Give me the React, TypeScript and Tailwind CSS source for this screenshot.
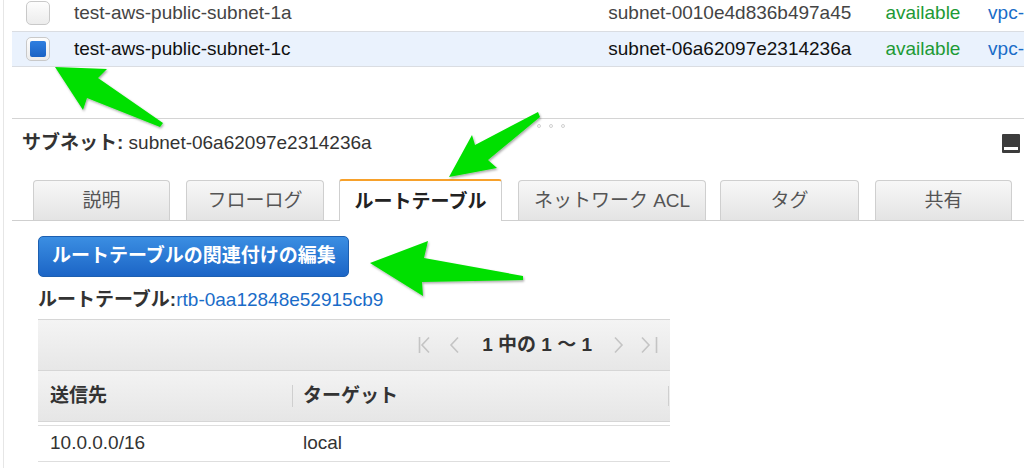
import React from 'react';

const font = "font-['Liberation_Sans','Noto_Sans_CJK_JP',sans-serif]";

const subnets = [
  { name: 'test-aws-public-subnet-1a', id: 'subnet-0010e4d836b497a45', selected: false },
  { name: 'test-aws-public-subnet-1c', id: 'subnet-06a62097e2314236a', selected: true },
];

const tabs = [
  { label: '説明', cls: 'w-[137px]' },
  { label: 'フローログ', cls: 'w-[138px] ml-[16px]' },
  { label: 'ルートテーブル', cls: 'w-[163px] ml-[15px]', active: true },
  { label: 'ネットワーク ACL', cls: 'w-[188px] ml-[16px]' },
  { label: 'タグ', cls: 'w-[139px] ml-[14px]' },
  { label: '共有', cls: 'w-[137px] ml-[16px]' },
];

function Checkbox({ checked }: { checked: boolean }) {
  return (
    <div className="w-[24px] h-[24px] rounded-[5px] border border-[#c9c9c9] bg-gradient-to-b from-[#fdfdfd] to-[#ececec] flex items-center justify-center shrink-0">
      {checked && <div className="w-[16px] h-[16px] rounded-[2px] bg-gradient-to-b from-[#2f7fe0] to-[#1a62c4]" />}
    </div>
  );
}

function Arrows() {
  return (
    <svg className="absolute inset-0 pointer-events-none" width="1024" height="473" viewBox="0 0 1024 473">
      <defs>
        <filter id="sh" x="-20%" y="-20%" width="140%" height="140%">
          <feDropShadow dx="1" dy="1.5" stdDeviation="1.2" floodColor="#000" floodOpacity="0.35" />
        </filter>
      </defs>
      <g fill="#00e000" filter="url(#sh)">
        <polygon points="55,67 107,69 98,78 163,123 160,127 87,98 83,110" />
        <polygon points="449,177 472,135 475,145 538,112 540,117 488,160 497,168" />
        <polygon points="370,263 428,241 424,258 523,276 523,280 422,282 423,296" />
      </g>
    </svg>
  );
}

function Pager() {
  return (
    <div className="flex items-center justify-end h-[51px] pr-[12px] text-[19px] bg-gradient-to-b from-[#f4f4f4] to-[#e7e7e7] border-b border-[#d6d6d6]">
      <svg width="12" height="18" viewBox="0 0 12 18" className="mr-[19px]" fill="none" stroke="#c4c4c4" strokeWidth="1.6">
        <path d="M1.5 1v16M11 1.5L4 9l7 7.5" />
      </svg>
      <svg width="10" height="18" viewBox="0 0 10 18" className="mr-[23px]" fill="none" stroke="#c4c4c4" strokeWidth="1.6">
        <path d="M9 1.5L2 9l7 7.5" />
      </svg>
      <span className="font-bold text-[#333]">1 中の 1 〜 1</span>
      <svg width="10" height="18" viewBox="0 0 10 18" className="ml-[22px]" fill="none" stroke="#c4c4c4" strokeWidth="1.6">
        <path d="M1 1.5L8 9l-7 7.5" />
      </svg>
      <svg width="17" height="18" viewBox="0 0 17 18" className="ml-[17px]" fill="none" stroke="#c4c4c4" strokeWidth="1.6">
        <path d="M1 1.5L8 9l-7 7.5M15.5 1v16" />
      </svg>
    </div>
  );
}

export default function App() {
  return (
    <div className={`relative w-[1024px] h-[473px] overflow-hidden bg-white pl-[3px] ${font}`}>
      <div className="h-full border-l border-[#e6e6e6] pl-[8px]">
        {/* subnet list */}
        <div className="-mt-[5px]">
          {subnets.map((s) => (
            <div
              key={s.id}
              className={`flex items-center h-[36px] text-[19px] ${
                s.selected
                  ? 'bg-[#eaf2fd] border-y border-[#dadde2] text-[#111]'
                  : 'text-[#444]'
              }`}
            >
              <div className="ml-[14px]">
                <Checkbox checked={s.selected} />
              </div>
              <div className="ml-[24px] w-[536px]">{s.name}</div>
              <div className="w-[278px]">{s.id}</div>
              <div className="w-[103px] text-[#1d9a35]">available</div>
              <div className="text-[#1a6cc8] whitespace-nowrap">vpc-</div>
            </div>
          ))}
        </div>

        {/* detail panel */}
        <div className="mt-[51px] border-t border-[#d4d4d4]">
          <div className="flex gap-[8px] ml-[525px] pt-[5px] h-[9px]">
            <span className="w-[4px] h-[4px] rounded-full border border-[#d0d0d0]" />
            <span className="w-[4px] h-[4px] rounded-full border border-[#d0d0d0]" />
            <span className="w-[4px] h-[4px] rounded-full border border-[#d0d0d0]" />
          </div>
          <div className="flex items-center justify-between h-[30px] pl-[10px] pr-[4px]">
            <div className="text-[19px] text-[#333]">
              <span className="font-bold">サブネット: </span>
              <span>subnet-06a62097e2314236a</span>
            </div>
            <div className="w-[18px] h-[19px] rounded-[1px] bg-[#3c3c3c] flex items-end justify-center pb-[3px]">
              <div className="w-[14px] h-[3px] bg-white" />
            </div>
          </div>

          {/* tabs */}
          <div className="mt-[22px] flex items-end h-[41px] pl-[21px] border-b border-[#cfcfcf]">
            {tabs.map((t) =>
              t.active ? (
                <div
                  key={t.label}
                  className={`${t.cls} h-[42px] -mb-[1px] pt-[3px] bg-white border border-b-0 border-[#cfcfcf] border-t-2 border-t-[#f7a12b] rounded-t-[3px] flex items-center justify-center text-[19px] font-bold text-[#222]`}
                >
                  {t.label}
                </div>
              ) : (
                <div
                  key={t.label}
                  className={`${t.cls} h-[40px] pt-[2px] bg-gradient-to-b from-[#f7f7f7] to-[#e4e4e4] border border-b-0 border-[#cfcfcf] rounded-t-[4px] flex items-center justify-center text-[19px] text-[#555]`}
                >
                  {t.label}
                </div>
              )
            )}
          </div>

          {/* route table content */}
          <div className="pl-[26px]">
            <button className="mt-[15px] w-[311px] h-[41px] rounded-[5px] border border-[#1d5fb0] bg-gradient-to-b from-[#3b8ee2] to-[#1c65c6] text-white font-bold text-[19px] flex items-center pl-[13px]">
              ルートテーブルの関連付けの編集
            </button>
            <div className="mt-[11px] h-[24px] flex items-center text-[19px]">
              <span className="font-bold text-[#333]">ルートテーブル:</span>
              <span className="text-[#1a6cc8]">rtb-0aa12848e52915cb9</span>
            </div>

            <div className="mt-[7px] w-[632px] border-t border-[#d6d6d6]">
              <Pager />
              <div className="flex items-center h-[51px] text-[19px] font-bold text-[#333] bg-gradient-to-b from-[#f3f3f3] to-[#e6e6e6] border-b border-[#d6d6d6]">
                <div className="w-[254px] pl-[12px]">送信先</div>
                <div className="w-[1px] h-[22px] bg-[#cfcfcf]" />
                <div className="flex-1 pl-[10px]">ターゲット</div>
                <div className="w-[1px] h-[20px] bg-[#cfcfcf] mr-[1px]" />
              </div>
              <div className="mt-[3px] border-t border-[#dedede] border-b flex items-center h-[37px] text-[19px] text-[#333]">
                <div className="w-[255px] pl-[12px]">10.0.0.0/16</div>
                <div className="pl-[10px]">local</div>
              </div>
            </div>
          </div>
        </div>
      </div>
      <Arrows />
    </div>
  );
}
